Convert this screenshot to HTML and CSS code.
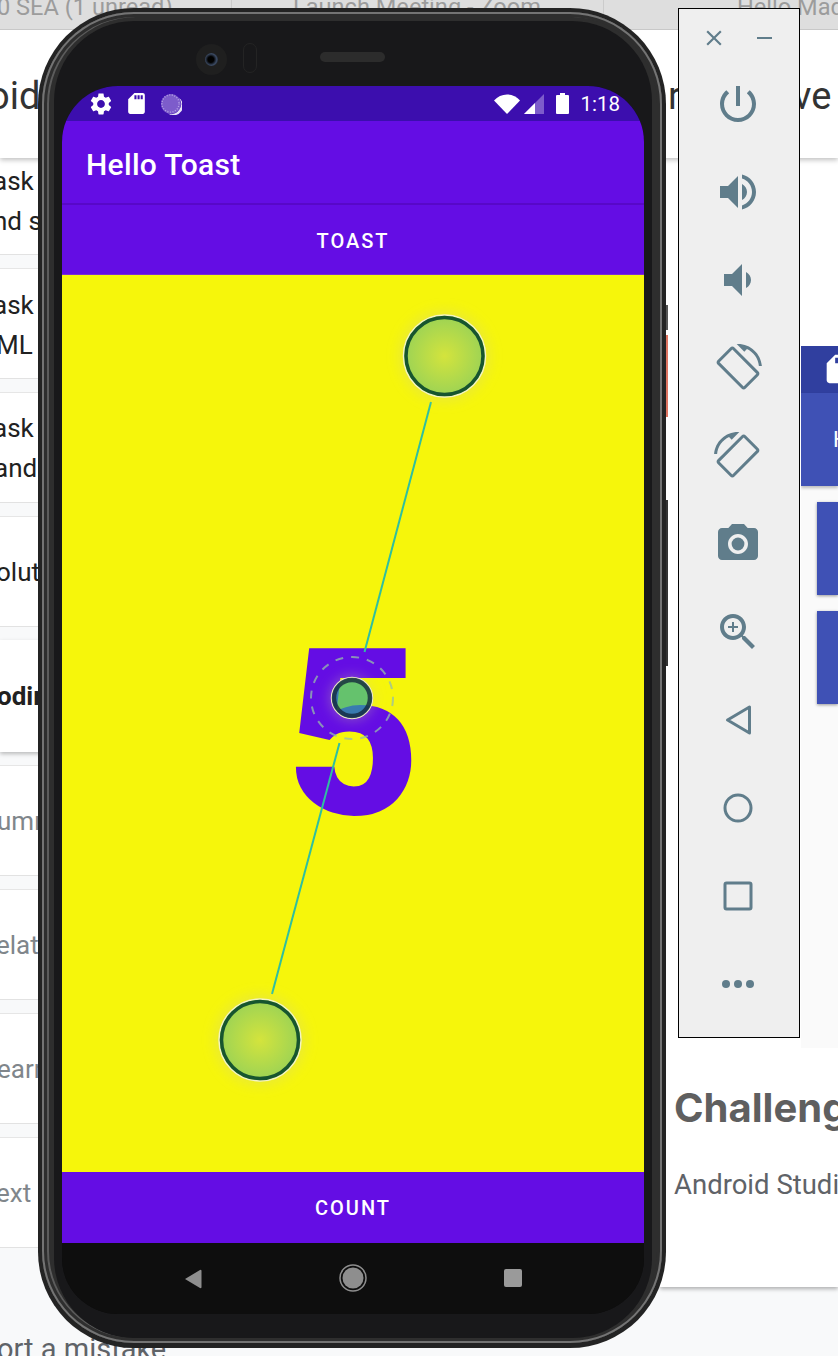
FILE: index.html
```html
<!DOCTYPE html>
<html lang="en">
<head>
  <meta charset="UTF-8">
  <title>Hello Toast</title>
  <link rel="stylesheet" href="styles.css">
</head>
<body>
  <!-- desktop behind the emulator -->
  <div class="browser">
    <div class="tabs">
      <span class="tab tab-a">0 SEA (1 unread)</span>
      <span class="tab-sep tab-sep-a"></span>
      <span class="tab tab-b">Launch Meeting - Zoom</span>
      <span class="tab-sep tab-sep-b"></span>
      <span class="tab tab-c">Hello Mad</span>
    </div>
    <div class="title-bar">
      <span class="title-left">oid</span>
      <span class="title-mid">r</span>
      <span class="title-right">ve</span>
    </div>
  </div>

  <div class="lesson-list">
    <div class="lesson lesson-first"><span class="s7">ask</span><span class="s7">nd s</span></div>
    <div class="lesson"><span class="s7">ask</span><span class="s4">ML</span></div>
    <div class="lesson lesson-third"><span class="s7">ask</span><span class="s6">and</span></div>
    <div class="lesson lesson-one"><span class="s4">olut</span></div>
    <div class="lesson lesson-one lesson-active"><span class="s3">odir</span></div>
    <div class="lesson lesson-one lesson-muted"><span class="s3">umr</span></div>
    <div class="lesson lesson-one lesson-muted"><span class="s4">elat</span></div>
    <div class="lesson lesson-one lesson-muted"><span class="s3">earn</span></div>
    <div class="lesson lesson-one lesson-muted"><span class="s4">ext</span></div>
  </div>
  <div class="report">ort a mistake</div>

  <div class="article">
    <div class="figure">
      <div class="figure-status">
        <svg class="figure-sd" viewBox="0 0 24 24"><path d="M18 2h-8L4.020 8 4 20c0 1.100.9 2 2 2h12c1.100 0 2-.9 2-2V4c0-1.100-.9-2-2-2zm-6 6h-2V4h2v4zm3 0h-2V4h2v4zm3 0h-2V4h2v4z"/></svg>
      </div>
      <div class="figure-bar">H</div>
      <div class="figure-btn"></div>
      <div class="figure-btn"></div>
    </div>
    <h2 class="challenge">Challeng</h2>
    <p class="challenge-text">Android Studi</p>
  </div>

  <!-- hardware keys poking out past the frame -->
  <div class="key key-a"></div>
  <div class="key key-b"></div>
  <div class="key key-c"></div>

  <div class="phone">
    <div class="rim">
      <div class="bezel">
        <div class="top-sensors">
          <div class="camera"><div class="lens"></div></div>
          <div class="sensor"></div>
          <div class="speaker"></div>
        </div>
        <div class="screen">
          <div class="status-bar">
            <svg class="st-gear" viewBox="0 0 24 24"><path d="M19.140 12.940c.04-.3.06-.61.06-.94 0-.32-.02-.64-.07-.94l2.030-1.580c.18-.14.23-.41.12-.61l-1.920-3.320c-.12-.22-.37-.29-.59-.22l-2.390.96c-.5-.38-1.030-.7-1.620-.94l-.36-2.540c-.04-.24-.24-.41-.48-.41h-3.840c-.24 0-.43.17-.47.41l-.36 2.540c-.59.24-1.130.57-1.620.94l-2.390-.96c-.22-.08-.47 0-.59.22L2.740 8.870c-.12.21-.08.47.12.61l2.030 1.580c-.05.3-.09.63-.09.94s.02.64.07.94l-2.030 1.580c-.18.14-.23.41-.12.61l1.920 3.320c.12.22.37.29.59.22l2.390-.96c.5.38 1.030.7 1.620.94l.36 2.540c.05.24.24.41.48.41h3.840c.24 0 .44-.17.47-.41l.36-2.540c.59-.24 1.130-.56 1.620-.94l2.390.96c.22.08.47 0 .59-.22l1.920-3.320c.12-.22.07-.47-.12-.61l-2.010-1.580zM12 15.600c-1.980 0-3.600-1.620-3.600-3.600s1.620-3.600 3.600-3.600 3.600 1.620 3.600 3.600-1.620 3.600-3.600 3.600z"/></svg>
            <svg class="st-sd" viewBox="0 0 24 24"><path d="M18 2h-8L4.020 8 4 20c0 1.100.9 2 2 2h12c1.100 0 2-.9 2-2V4c0-1.100-.9-2-2-2zm-6 6h-2V4h2v4zm3 0h-2V4h2v4zm3 0h-2V4h2v4z"/></svg>
            <svg class="st-spin" viewBox="0 0 22 22">
              <circle cx="11" cy="11" r="10" fill="#7d5ccb"/>
              <path d="M19 5a10 10 0 0 1-11 15.600A9.400 9.400 0 0 0 19 5z" fill="#e8e4f6"/>
              <circle cx="10.500" cy="10.500" r="8.600" fill="none" stroke="#b5a2e6" stroke-width="1.400" stroke-dasharray="1 1.600"/>
            </svg>
            <div class="status-right">
              <svg class="st-wifi" viewBox="0 0 26 20"><path d="M0 6.500C3.500 2.500 8 .5 13 .5s9.500 2 13 6L13 20z"/></svg>
              <svg class="st-signal" viewBox="0 0 20 20">
                <path d="M20 0v20H0z" fill="#7d5ccb"/>
                <path d="M11 9v11H0z" fill="#fff"/>
              </svg>
              <svg class="st-battery" viewBox="0 0 13 21">
                <path d="M4 0h5v2h3a1 1 0 0 1 1 1v17a1 1 0 0 1-1 1H1a1 1 0 0 1-1-1V3a1 1 0 0 1 1-1h3z"/>
              </svg>
              <span class="clock">1:18</span>
            </div>
          </div>
          <div class="app-bar">Hello Toast</div>
          <div class="app-btn app-btn-toast">TOAST</div>
          <div class="stage">
            <span class="count">5</span>
            <svg class="pinch" viewBox="62 275 582 897">
              <defs>
                <radialGradient id="touch">
                  <stop offset="0" stop-color="#00a39a" stop-opacity=".1"/>
                  <stop offset="1" stop-color="#00a39a" stop-opacity=".34"/>
                </radialGradient>
                <filter id="soft" x="-50%" y="-50%" width="200%" height="200%"><feGaussianBlur stdDeviation="6"/></filter>
              </defs>
              <line x1="431" y1="402" x2="364.500" y2="652" class="pinch-line"/>
              <line x1="339.500" y1="743" x2="272" y2="994" class="pinch-line"/>
              <circle cx="352" cy="698" r="41" class="pinch-dash"/>

              <circle cx="444.500" cy="356" r="46" class="pinch-glow" filter="url(#soft)"/>
              <circle cx="444.500" cy="356" r="41" fill="url(#touch)" stroke="#f3f3c4" stroke-width="1.500"/>
              <circle cx="444.500" cy="356" r="38.500" class="pinch-ring"/>

              <circle cx="260" cy="1040" r="46" class="pinch-glow" filter="url(#soft)"/>
              <circle cx="260" cy="1040" r="41" fill="url(#touch)" stroke="#f3f3c4" stroke-width="1.500"/>
              <circle cx="260" cy="1040" r="38.500" class="pinch-ring"/>

              <circle cx="352" cy="698" r="23" class="pinch-glow" filter="url(#soft)"/>
              <circle cx="352" cy="698" r="20.500" fill="rgba(0,163,154,.57)" stroke="#eeeacb" stroke-width="1.500"/>
              <circle cx="352" cy="698" r="18" class="pinch-ring pinch-ring-small"/>
            </svg>
          </div>
          <div class="app-btn">COUNT</div>
          <div class="nav-bar">
            <svg class="nav-back" viewBox="0 0 18 20"><path d="M1 10 16 1a1 1 0 0 1 1.500.900v16.200a1 1 0 0 1-1.500.900z"/></svg>
            <svg class="nav-home" viewBox="0 0 28 28">
              <circle cx="14" cy="14" r="13" fill="none" stroke="#8e8e8e" stroke-width="1.500"/>
              <circle cx="14" cy="14" r="10.500" fill="#8e8e8e"/>
            </svg>
            <div class="nav-square"></div>
          </div>
        </div>
      </div>
    </div>
  </div>

  <!-- emulator side toolbar -->
  <div class="toolbar">
    <div class="toolbar-top">
      <svg class="tb-close" viewBox="0 0 24 24"><path d="M19 6.410 17.590 5 12 10.590 6.410 5 5 6.410 10.590 12 5 17.590 6.410 19 12 13.410 17.590 19 19 17.590 13.410 12z"/></svg>
      <div class="tb-min"></div>
    </div>
    <div class="tb-item"><svg viewBox="0 0 24 24"><path d="M13 3h-2v10h2V3zm4.830 2.170-1.420 1.420C17.990 7.860 19 9.810 19 12c0 3.870-3.130 7-7 7s-7-3.130-7-7c0-2.190 1.010-4.140 2.580-5.420L6.170 5.170C4.230 6.820 3 9.260 3 12c0 4.970 4.030 9 9 9s9-4.030 9-9c0-2.740-1.230-5.180-3.170-6.830z"/></svg></div>
    <div class="tb-item"><svg viewBox="0 0 24 24"><path d="M3 9v6h4l5 5V4L7 9H3zm13.500 3c0-1.770-1.020-3.290-2.500-4.030v8.050c1.480-.73 2.500-2.250 2.500-4.020zM14 3.230v2.060c2.890.86 5 3.540 5 6.710s-2.110 5.850-5 6.710v2.060c4.010-.91 7-4.490 7-8.770s-2.990-7.860-7-8.770z"/></svg></div>
    <div class="tb-item"><svg viewBox="0 0 24 24"><path d="M18.500 12c0-1.770-1.020-3.290-2.500-4.030v8.050c1.480-.73 2.500-2.250 2.500-4.020zM5 9v6h4l5 5V4L9 9H5z"/></svg></div>
    <div class="tb-item"><svg viewBox="0 0 24 24"><path d="M16.480 2.520c3.270 1.550 5.610 4.720 5.970 8.480h1.500C23.440 4.840 18.290 0 12 0l-.66.030 3.810 3.810 1.330-1.320zm-6.250-.77c-.59-.59-1.540-.59-2.120 0L1.750 8.110c-.59.59-.59 1.540 0 2.120l12.020 12.020c.59.59 1.540.59 2.120 0l6.360-6.360c.59-.59.59-1.540 0-2.120L10.230 1.750zm4.600 19.440L2.810 9.170l6.360-6.360 12.020 12.020-6.360 6.360z"/></svg></div>
    <div class="tb-item"><svg class="flip" viewBox="0 0 24 24"><path d="M16.480 2.520c3.270 1.550 5.610 4.720 5.970 8.480h1.500C23.440 4.840 18.290 0 12 0l-.66.030 3.810 3.810 1.330-1.320zm-6.250-.77c-.59-.59-1.540-.59-2.120 0L1.750 8.110c-.59.59-.59 1.540 0 2.120l12.020 12.020c.59.59 1.540.59 2.120 0l6.360-6.360c.59-.59.59-1.540 0-2.120L10.230 1.750zm4.600 19.440L2.810 9.170l6.360-6.360 12.020 12.020-6.360 6.360z"/></svg></div>
    <div class="tb-item"><svg viewBox="0 0 24 24"><circle cx="12" cy="12" r="3.200"/><path d="M9 2 7.170 4H4c-1.100 0-2 .9-2 2v12c0 1.100.9 2 2 2h16c1.100 0 2-.9 2-2V6c0-1.100-.9-2-2-2h-3.170L15 2H9zm3 15c-2.760 0-5-2.240-5-5s2.240-5 5-5 5 2.240 5 5-2.240 5-5 5z"/></svg></div>
    <div class="tb-item"><svg viewBox="0 0 24 24"><path d="M15.500 14h-.79l-.28-.27C15.410 12.590 16 11.110 16 9.500 16 5.910 13.090 3 9.500 3S3 5.910 3 9.500 5.910 16 9.500 16c1.610 0 3.090-.59 4.230-1.570l.27.280v.79l5 4.990L20.490 19l-4.990-5zm-6 0C7.010 14 5 11.990 5 9.500S7.010 5 9.500 5 14 7.010 14 9.500 11.990 14 9.500 14z"/><path d="M12 10h-2v2H9v-2H7V9h2V7h1v2h2v1z"/></svg></div>
    <div class="tb-item"><svg viewBox="0 0 48 48"><path class="tb-line" d="M13.500 24 35.500 11v26z"/></svg></div>
    <div class="tb-item"><svg viewBox="0 0 48 48"><circle class="tb-line" cx="24" cy="24" r="13"/></svg></div>
    <div class="tb-item"><svg viewBox="0 0 48 48"><rect class="tb-line" x="11" y="11" width="26" height="26" rx="1.500"/></svg></div>
    <div class="tb-item"><svg viewBox="0 0 48 48"><circle cx="12" cy="24" r="4"/><circle cx="24" cy="24" r="4"/><circle cx="36" cy="24" r="4"/></svg></div>
  </div>
</body>
</html>
```
FILE: styles.css
```css
html, body {
  margin: 0;
  height: 100%;
}
body {
  position: relative;
  width: 838px;
  height: 1356px;
  overflow: hidden;
  background-color: #f8f9fa;
  font-family: Roboto, "Liberation Sans", sans-serif;
}

/* browser behind */
.browser {
  position: absolute;
  left: 0;
  top: 0;
  width: 838px;
  height: 158px;
  background-color: #fff;
  box-shadow: 0 2px 5px rgba(0, 0, 0, 0.25);
  z-index: 2;
}
.tabs {
  position: relative;
  height: 29px;
  background-color: #dedede;
  border-bottom: 1px solid #c8c8c8;
  overflow: hidden;
}
.tab {
  position: absolute;
  top: -7px;
  font-size: 23.600px;
  line-height: 28px;
  color: #9c9c9c;
  white-space: nowrap;
}
.tab-a { left: -3px; }
.tab-b { left: 293px; }
.tab-c { left: 737px; }
.tab-sep {
  position: absolute;
  top: 0;
  width: 1px;
  height: 29px;
  background-color: #cbcbcb;
}
.tab-sep-a { left: 231px; }
.tab-sep-b { left: 603px; }
.title-bar {
  position: relative;
  height: 128px;
  font-size: 38px;
  color: #333;
}
.title-bar span {
  position: absolute;
  top: 43px;
  line-height: 46px;
}
.title-left { left: -12px; }
.title-mid { left: 668px; }
.title-right { left: 793px; }

.lesson-list {
  position: absolute;
  left: 0;
  top: 158px;
  width: 110px;
  display: flex;
  flex-direction: column;
  gap: 13px;
}
.lesson {
  height: 111px;
  box-sizing: border-box;
  padding-top: 16px;
  background-color: #fff;
  border-top: 1px solid #e6e6e6;
  border-bottom: 1px solid #e2e2e2;
  font-size: 26px;
  line-height: 40px;
  color: #212121;
}
.lesson span {
  display: block;
  white-space: nowrap;
}
.lesson-first {
  height: 97px;
  padding-top: 3px;
  border-top: 0;
}
.lesson-third {
  padding-top: 15px;
}
.lesson-one {
  display: flex;
  align-items: center;
  padding-top: 0;
}
.lesson-active {
  height: 112px;
  font-weight: 700;
  border: 0;
  box-shadow: 0 2px 4px rgba(0, 0, 0, 0.25);
}
.lesson-muted {
  color: #80868b;
}
.s3 { margin-left: -3px; }
.s4 { margin-left: -4px; }
.s6 { margin-left: -6px; }
.s7 { margin-left: -7px; }
.report {
  position: absolute;
  left: -3px;
  top: 1332px;
  font-size: 29px;
  line-height: 34px;
  color: #5f6368;
  white-space: nowrap;
}

/* article on the right */
.article {
  position: absolute;
  left: 660px;
  top: 158px;
  width: 178px;
  height: 1129px;
  overflow: hidden;
  background-color: #fff;
  box-shadow: 0 2px 4px rgba(0, 0, 0, 0.3);
}
.figure {
  position: absolute;
  left: 141px;
  top: 188px;
  width: 37px;
  height: 702px;
  background-color: #fafafa;
  overflow: hidden;
}
.figure-status {
  height: 47px;
  box-sizing: border-box;
  padding: 6px 0 0 20px;
  background-color: #303f9f;
}
.figure-sd {
  display: block;
  width: 34px;
  height: 34px;
  fill: #fff;
}
.figure-bar {
  height: 93px;
  padding-left: 32px;
  background-color: #3f51b5;
  box-shadow: 0 2px 3px rgba(0, 0, 0, 0.25);
  color: #fff;
  font-size: 22px;
  line-height: 93px;
}
.figure-btn {
  height: 93px;
  margin: 16px 0 0 16px;
  background-color: #3f51b5;
  box-shadow: 0 1px 3px rgba(0, 0, 0, 0.4);
}
.challenge {
  position: absolute;
  left: 14px;
  top: 926px;
  margin: 0;
  font-family: Inter, Roboto, sans-serif;
  font-size: 40px;
  line-height: 48px;
  font-weight: 700;
  color: #5f5f5f;
  white-space: nowrap;
}
.challenge-text {
  position: absolute;
  left: 14px;
  top: 1011px;
  margin: 0;
  font-size: 27.500px;
  line-height: 32px;
  color: #5f6368;
  white-space: nowrap;
}

/* side keys */
.key {
  position: absolute;
  left: 660px;
  width: 8px;
  z-index: 3;
}
.key-a { top: 305px; height: 25px; background-color: #555; }
.key-b { top: 335px; height: 82px; background-color: #de7360; }
.key-c { top: 500px; height: 166px; background-color: #333; }

/* device */
.phone {
  position: absolute;
  left: 38px;
  top: 8px;
  width: 628px;
  height: 1340px;
  box-sizing: border-box;
  padding: 4px 4px 5px;
  border-radius: 96px;
  background-color: #232323;
  z-index: 4;
}
.rim {
  height: 100%;
  box-sizing: border-box;
  padding: 9px 10px 5px 12px;
  border-radius: 92px;
  background-color: #2e2e2e;
  box-shadow: inset 0 0 0 2px #747474, inset 0 0 0 5px #2e2e2e, inset 2px 0 0 5px #5c5c5c;
}
.bezel {
  position: relative;
  height: 100%;
  box-sizing: border-box;
  padding: 65px 8px 24px;
  border-radius: 80px;
  background-color: #18181a;
}
.top-sensors {
  position: absolute;
  left: 0;
  top: 0;
  width: 100%;
  height: 64px;
}
.camera {
  position: absolute;
  left: 142px;
  top: 23px;
  width: 31px;
  height: 31px;
  border-radius: 50%;
  background-color: #1f1f1f;
  display: flex;
  align-items: center;
  justify-content: center;
}
.lens {
  width: 13px;
  height: 13px;
  border-radius: 50%;
  background: radial-gradient(circle at 45% 50%, #000 30%, #3b4a63 60%, #111 100%);
}
.sensor {
  position: absolute;
  left: 189px;
  top: 22px;
  width: 14px;
  height: 30px;
  border-radius: 8px;
  border: 1px solid #242424;
  box-sizing: border-box;
}
.speaker {
  position: absolute;
  left: 266px;
  top: 31px;
  width: 65px;
  height: 10px;
  border-radius: 5px;
  background-color: #2c2c2c;
}
.screen {
  position: relative;
  height: 100%;
  display: flex;
  flex-direction: column;
  border-radius: 56px;
  overflow: hidden;
  background-color: #0e0e0e;
}
.status-bar {
  flex: 0 0 35px;
  display: flex;
  align-items: center;
  padding: 0 24px 0 26px;
  background-color: #3c0eae;
}
.status-bar svg {
  fill: #fff;
  display: block;
}
.st-gear { width: 26px; height: 26px; }
.st-sd { width: 25px; height: 25px; margin-left: 10px; }
.st-spin { width: 22px; height: 22px; margin-left: 11px; }
.status-right {
  margin-left: auto;
  display: flex;
  align-items: center;
}
.st-wifi { width: 26px; height: 20px; }
.st-signal { width: 20px; height: 20px; margin-left: 4px; }
.st-battery { width: 13px; height: 21px; margin-left: 12px; }
.clock {
  margin-left: 11px;
  color: #fff;
  font-size: 20.500px;
  line-height: 24px;
}
.app-bar {
  flex: 0 0 84px;
  box-sizing: border-box;
  display: flex;
  align-items: center;
  padding: 4px 0 0 24px;
  background-color: #640de4;
  border-bottom: 2px solid #5808c8;
  color: #fff;
  font-size: 30px;
  font-weight: 500;
  letter-spacing: 0.3px;
}
.app-btn {
  flex: 0 0 71px;
  display: flex;
  align-items: center;
  justify-content: center;
  background-color: #640de4;
  color: #fff;
  font-size: 20px;
  font-weight: 500;
  letter-spacing: 2px;
}
.app-btn-toast {
  flex-basis: 70px;
  padding-top: 2px;
  border-bottom: 1px solid #7d2fd0;
  box-sizing: border-box;
}
.stage {
  position: relative;
  flex: 1;
  min-height: 0;
  display: flex;
  align-items: center;
  justify-content: center;
  background-color: #f6f60b;
}
.count {
  margin: 22px 0 0 2px;
  font-size: 232px;
  line-height: 232px;
  font-weight: 900;
  color: #640de4;
}
.pinch {
  position: absolute;
  left: 0;
  top: 0;
  width: 100%;
  height: 100%;
}
.pinch-line {
  stroke: #2fbfa0;
  stroke-width: 2;
}
.pinch-dash {
  fill: none;
  stroke: rgba(150, 190, 170, 0.75);
  stroke-width: 2;
  stroke-dasharray: 8 8;
}
.pinch-glow {
  fill: rgba(210, 210, 140, 0.3);
}
.pinch-ring {
  fill: none;
  stroke: #17552f;
  stroke-width: 3.500;
}
.pinch-ring-small {
  stroke: rgba(20, 40, 60, 0.8);
  stroke-width: 4.500;
}
.nav-bar {
  position: relative;
  flex: 0 0 71px;
  background-color: #0e0e0e;
}
.nav-back {
  position: absolute;
  left: 122px;
  top: 26px;
  width: 18px;
  height: 20px;
  fill: #8e8e8e;
}
.nav-home {
  position: absolute;
  left: 277px;
  top: 21px;
  width: 28px;
  height: 28px;
}
.nav-square {
  position: absolute;
  left: 442px;
  top: 26px;
  width: 18px;
  height: 18px;
  border-radius: 2px;
  background-color: #9a9a9a;
}

/* emulator toolbar */
.toolbar {
  position: absolute;
  left: 678px;
  top: 8px;
  width: 122px;
  height: 1030px;
  box-sizing: border-box;
  padding-right: 2px;
  border: 1px solid #000;
  background-color: #efefef;
  z-index: 5;
  display: flex;
  flex-direction: column;
  align-items: center;
}
.toolbar svg {
  fill: #607d8b;
  display: block;
}
.toolbar-top {
  width: 100%;
  height: 51px;
  position: relative;
}
.tb-close {
  position: absolute;
  left: 22px;
  top: 16px;
  width: 26px;
  height: 26px;
}
.tb-min {
  position: absolute;
  left: 78px;
  top: 28px;
  width: 15px;
  height: 2px;
  background-color: #607d8b;
}
.tb-item {
  flex: 0 0 88px;
  display: flex;
  align-items: center;
  justify-content: center;
  width: 100%;
}
.tb-item svg {
  width: 48px;
  height: 48px;
}
.toolbar .tb-line {
  fill: none;
  stroke: #607d8b;
  stroke-width: 3;
  stroke-linejoin: round;
}
.flip {
  transform: scaleX(-1);
}
```
